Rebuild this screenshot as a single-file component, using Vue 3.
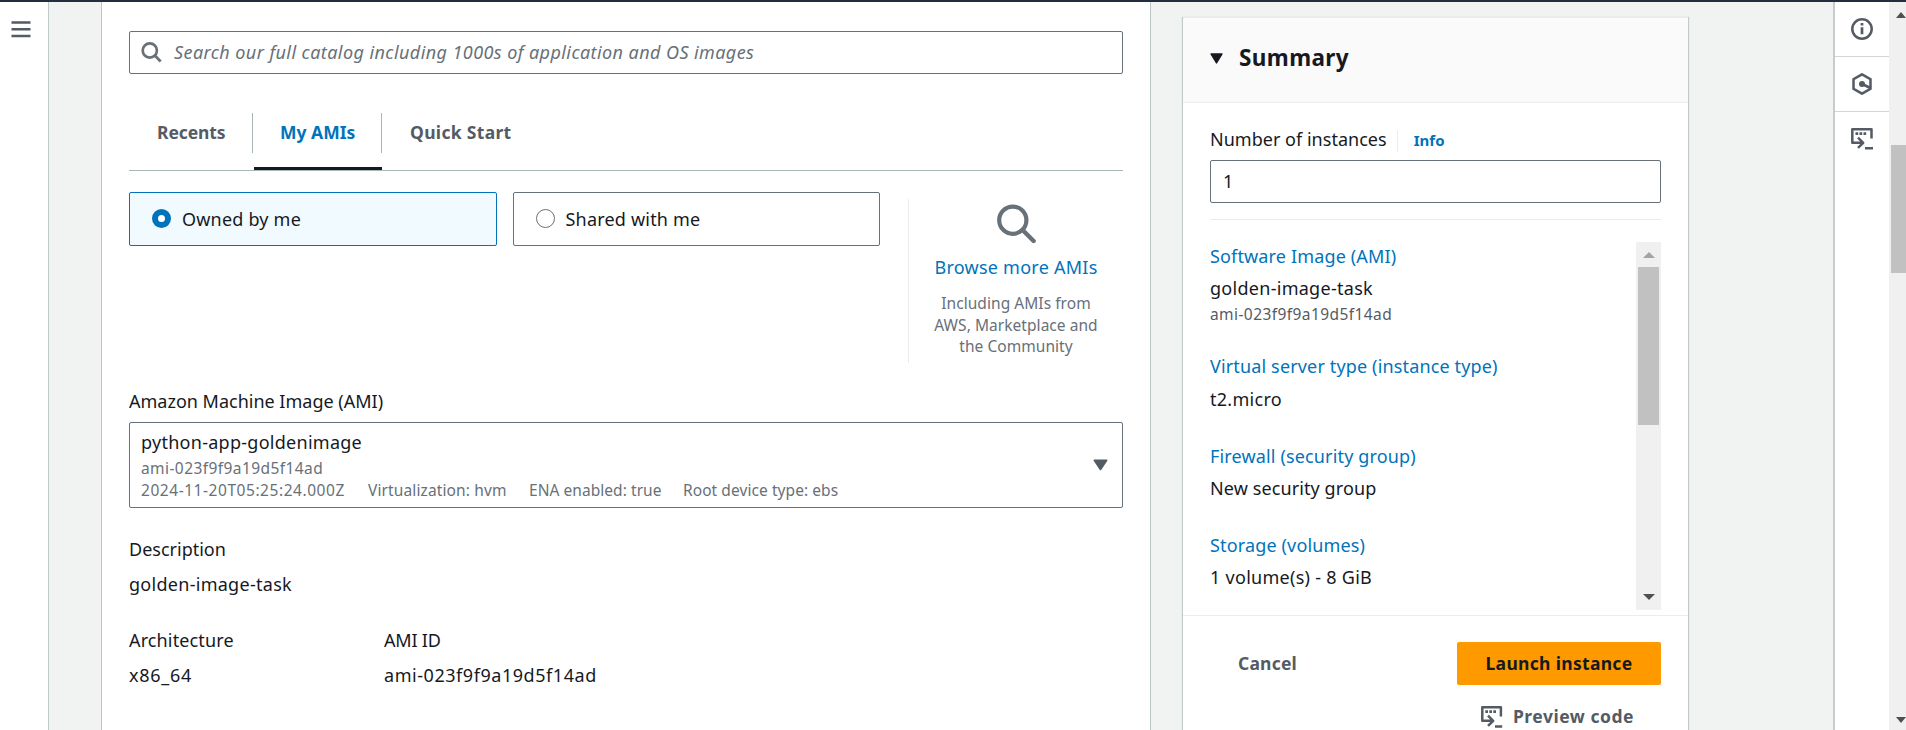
<script setup>
import { ref } from 'vue'

const search = ref('')
const instances = ref('1')

const tabs = [
  { label: 'Recents', cls: 'recents' },
  { label: 'My AMIs', cls: 'mine' },
  { label: 'Quick Start', cls: 'quick' },
]
const amiMeta = [
  { text: '2024-11-20T05:25:24.000Z', cls: 'created' },
  { text: 'Virtualization: hvm', cls: 'virt' },
  { text: 'ENA enabled: true', cls: 'ena' },
  { text: 'Root device type: ebs', cls: 'root' },
]
const summary = [
  { title: 'Software Image (AMI)', value: 'golden-image-task', note: 'ami-023f9f9a19d5f14ad', cls: 'software' },
  { title: 'Virtual server type (instance type)', value: 't2.micro', cls: 'server' },
  { title: 'Firewall (security group)', value: 'New security group', cls: 'firewall' },
  { title: 'Storage (volumes)', value: '1 volume(s) - 8 GiB', cls: 'storage' },
]
</script>

<template>
  <div class="page">
    <div class="topbar"></div>
    <div class="body">
      <nav class="nav-rail">
        <svg width="20" height="17" viewBox="0 0 20 17"><path d="M.5 1.5h19M.5 8.3h19M.5 15h19" stroke="#545b64" stroke-width="2.4" /></svg>
      </nav>

      <main class="content">
        <section class="card">
          <label class="search">
            <svg width="21" height="21" viewBox="0 0 21 21" fill="none" stroke="#687078" stroke-width="2.7">
              <circle cx="8.8" cy="8.5" r="7.1" /><path d="M13.8 13.5l5.9 6" />
            </svg>
            <input v-model="search" placeholder="Search our full catalog including 1000s of application and OS images" />
          </label>

          <div class="tabs">
            <button v-for="t in tabs" :key="t.label" class="tab" :class="t.cls">
              <span>{{ t.label }}</span>
            </button>
          </div>

          <div class="source">
            <div class="tiles">
              <div class="tile selected"><i class="radio"></i><span>Owned by me</span></div>
              <div class="tile"><i class="radio"></i><span>Shared with me</span></div>
            </div>
            <div class="browse">
              <svg width="40" height="40" viewBox="0 0 40 40" fill="none" stroke="#687078">
                <circle cx="16.8" cy="16.2" r="13.6" stroke-width="4.2" />
                <path d="M26.600 26l11 11" stroke-width="4.4" stroke-linecap="round" />
              </svg>
              <a>Browse more AMIs</a>
              <p>Including AMIs from<br />AWS, Marketplace and<br />the Community</p>
            </div>
          </div>

          <div class="line label">Amazon Machine Image (AMI)</div>
          <div class="select">
            <div>
              <div class="line name">python-app-goldenimage</div>
              <div class="small ident">ami-023f9f9a19d5f14ad</div>
              <div class="small meta">
                <span v-for="m in amiMeta" :key="m.text" :class="m.cls">{{ m.text }}</span>
              </div>
            </div>
            <svg width="15" height="12" viewBox="0 0 15 12"><path d="M1.3 1.3h12.4L7.5 10.5z" fill="#545b64" stroke="#545b64" stroke-width="1.6" stroke-linejoin="round" /></svg>
          </div>

          <div class="details">
            <div class="detail wide"><span class="desc">Description</span><span class="task">golden-image-task</span></div>
            <div class="detail"><span class="arch">Architecture</span><span class="x86">x86_64</span></div>
            <div class="detail"><span class="idlabel">AMI ID</span><span class="amiid">ami-023f9f9a19d5f14ad</span></div>
          </div>
        </section>

        <aside class="summary">
          <header>
            <svg width="13" height="11" viewBox="0 0 13 11"><path d="M1 1h11L6.500 10z" fill="#16191f" stroke="#16191f" stroke-width="1.4" stroke-linejoin="round" /></svg>
            <h2>Summary</h2>
          </header>
          <div class="form">
            <div class="count-label"><span>Number of instances</span><a>Info</a></div>
            <input v-model="instances" class="count" />
            <div class="scroll-area">
              <div class="groups">
                <div v-for="s in summary" :key="s.title" class="group" :class="s.cls">
                  <a>{{ s.title }}</a>
                  <span class="value">{{ s.value }}</span>
                  <small v-if="s.note">{{ s.note }}</small>
                </div>
              </div>
              <div class="scrollbar inner">
                <svg width="12" height="6" viewBox="0 0 12 6"><path d="M0 6L6 0l6 6z" fill="#a3a3a3" /></svg>
                <div class="thumb"></div>
                <svg class="down" width="12" height="6" viewBox="0 0 12 6"><path d="M0 0h12L6 6z" fill="#505050" /></svg>
              </div>
            </div>
          </div>
          <footer>
            <div class="actions">
              <button class="cancel">Cancel</button>
              <button class="launch">Launch instance</button>
            </div>
            <button class="preview">
              <svg width="22" height="22" viewBox="0 0 22 22" fill="none" stroke="#545b64" stroke-width="2.5">
                <path d="M19.900 10.500V1.300H1.300V14.800H11.500M7 9.700l5.200 5.100L7 19.900M14 20.500h7.200" stroke-linejoin="round" />
                <path d="M4.300 5.600h10.700" stroke-width="2.700" stroke-dasharray="2.700 1.300" />
              </svg>
              <span>Preview code</span>
            </button>
          </footer>
        </aside>
      </main>

      <nav class="tool-rail">
        <div class="tool">
          <svg width="22" height="22" viewBox="0 0 22 22" fill="none" stroke="#545b64">
            <circle cx="11" cy="11" r="9.700" stroke-width="2.500" />
            <path d="M11 5v2.600M11 9.200v7" stroke-width="2.700" />
          </svg>
        </div>
        <div class="tool">
          <svg width="22" height="22" viewBox="0 0 22 22" fill="none" stroke="#545b64" stroke-width="2.500">
            <path d="M11 1.300l8.500 4.900v9.600L11 20.700l-8.500-4.900V6.200z" />
            <path d="M11 11l8.500 4" stroke-width="2.600" /><circle cx="11" cy="11" r="3" fill="#545b64" stroke="none" />
          </svg>
        </div>
        <div class="tool last">
          <svg width="22" height="22" viewBox="0 0 22 22" fill="none" stroke="#545b64" stroke-width="2.500">
            <path d="M20.500 10.500V1.300H1.300V14.800H11.500M7 9.700l5.200 5.100L7 19.900M14 20.300h8" stroke-linejoin="round" />
            <path d="M4.500 5.600h10.700" stroke-width="2.700" stroke-dasharray="2.700 1.300" />
          </svg>
        </div>
      </nav>

      <div class="scrollbar outer">
        <svg width="10" height="6" viewBox="0 0 10 6"><path d="M0 6L5 0l5 6z" fill="#505050" /></svg>
        <div class="thumb"></div>
        <svg class="down" width="10" height="6" viewBox="0 0 10 6"><path d="M0 0h10L5 6z" fill="#505050" /></svg>
      </div>
    </div>
  </div>
</template>

<style>
body { margin: 0; overflow: hidden; }
</style>

<style scoped>
* { box-sizing: border-box; }
.page {
  width: 1906px; height: 730px; overflow: hidden;
  display: flex; flex-direction: column;
  background: #f1f3f3; color: #16191f;
  font: 18px/24px "Noto Sans", "Open Sans", sans-serif;
}
button { border: 0; background: none; padding: 0; font: inherit; font-size: 17.500px; font-weight: 700; color: #545b64; }
input { font: inherit; color: #16191f; outline: 0; }
a { color: #0073bb; }
svg { display: block; flex: none; }
.topbar { height: 2px; flex: none; background: #232f3e; }
.body { display: flex; height: 728px; }

.nav-rail { width: 49px; flex: none; background: #fff; border-right: 1px solid #c0c9c9; padding: 19px 0 0 11px; }
.content { flex: 1; display: flex; align-items: flex-start; padding-left: 52px; gap: 31px; }

.card { width: 1050px; height: 728px; background: #fff; border: solid #bfc6c6; border-width: 0 1px; padding: 29px 27px 0; }
.search { display: flex; align-items: center; height: 43px; border: 1px solid #687078; border-radius: 2px; padding-left: 11px; gap: 12px; }
.search input { flex: 1; min-width: 0; border: 0; padding: 0 0 1px; background: none; height: 26px; letter-spacing: .42px; }
.search input::placeholder { color: #687078; font-style: italic; opacity: 1; }

.tabs { display: flex; height: 58px; margin-top: 39px; border-bottom: 1px solid #aab7b8; }
.tab { height: 57px; padding: 0 0 17px; display: flex; border-bottom: 3px solid transparent; }
.tab span { height: 40px; padding: 7px 27px 9px 28px; border-right: 1px solid #aab7b8; line-height: 24px; text-align: left; white-space: nowrap; }
.recents span { width: 124px; letter-spacing: -.1px; }
.mine { border-bottom-color: #16191f; margin-left: 1px; color: #0073bb; }
.mine span { width: 128px; padding-left: 26px; }
.quick span { border: 0; letter-spacing: .32px; }

.source { display: flex; margin-top: 21px; height: 172px; }
.tiles { width: 751px; display: flex; gap: 16px; flex: none; }
.tile { width: 368px; height: 54px; border: 1px solid #687078; border-radius: 2px; display: flex; align-items: center; padding: 0 0 1px 22px; gap: 11px; letter-spacing: .2px; }
.tile.selected { border-color: #0073bb; background: #f1faff; }
.radio { width: 19px; height: 19px; border: 1px solid #687078; border-radius: 50%; }
.selected .radio { border: 6px solid #0073bb; background: #fff; }
.browse { width: 216px; height: 164px; margin: 7px 0 0 28px; border-left: 1px solid #eaeded; display: flex; flex-direction: column; align-items: center; padding: 5px 0 0; }
.browse a { margin-top: 11px; letter-spacing: .25px; }
.browse p { margin: 14px 0 0; font-size: 15.500px; line-height: 21.500px; letter-spacing: .05px; color: #687078; text-align: center; }

.label { margin-top: 25px; }
.select { height: 86px; margin-top: 9px; border: 1px solid #687078; border-radius: 2px; padding: 7px 14px 0 11px; display: flex; justify-content: space-between; }
.select svg { margin-top: 29px; }
.name { letter-spacing: .27px; }
.small { font-size: 15.500px; line-height: 22px; color: #687078; }
.ident { margin-top: 3px; letter-spacing: .42px; }
.meta { display: flex; white-space: nowrap; }
.created { width: 227px; letter-spacing: .55px; }
.virt { width: 161px; letter-spacing: .12px; }
.ena { width: 154px; letter-spacing: .05px; }
.root { letter-spacing: .07px; }

.details { display: grid; grid-template-columns: 255px 1fr; row-gap: 32px; margin-top: 29px; }
.detail { display: flex; flex-direction: column; gap: 11px; }
.wide { grid-column: 1 / -1; }
.task { letter-spacing: .28px; }
.arch { letter-spacing: .13px; }
.x86 { letter-spacing: .7px; }
.amiid { letter-spacing: .55px; }
.idlabel { letter-spacing: -.2px; }

.summary { width: 507px; height: 720px; flex: none; margin-top: 15px; background: #fff; border: solid #c3caca; border-width: 0 1px; box-shadow: 0 0 1px rgba(0, 28, 36, .2); }
.summary header { height: 86px; background: #fafafa; border-bottom: 1px solid #eaeded; border-top: 1px solid #eaeded; display: flex; align-items: center; padding: 0 0 4px 27px; gap: 16px; }
h2 { margin: 0; font-size: 22.500px; line-height: 28px; letter-spacing: .39px; }
.form { padding: 24px 27px 0; height: 512px; }
.count-label { display: flex; height: 24px; letter-spacing: .02px; }
.count-label a { height: 22px; line-height: 20px; margin: 3px 0 0 10px; padding-left: 16px; border-left: 1px solid #eaeded; font-size: 15px; font-weight: 700; letter-spacing: .06px; }
.count { display: block; width: 100%; height: 43px; margin-top: 9px; border: 1px solid #687078; border-radius: 2px; padding: 0 12px 1px; }
.scroll-area { margin-top: 16px; padding-top: 22px; border-top: 1px solid #eaeded; display: flex; justify-content: space-between; height: 391px; }
.group { display: flex; flex-direction: column; white-space: nowrap; letter-spacing: .15px; }
.group .value { margin-top: 8px; letter-spacing: .28px; }
.group small { font-size: 15.500px; line-height: 22px; margin-top: 3px; color: #545b64; letter-spacing: .42px; }
.software { height: 112px; padding-top: 2px; }
.server { height: 90px; }
.server .value { margin-top: 9px; }
.firewall { height: 89px; }
.firewall .value { letter-spacing: .1px; }

.scrollbar { background: #f0f0f0; display: flex; flex-direction: column; align-items: center; flex: none; }
.scrollbar .thumb { background: #c1c1c1; }
.scrollbar .down { margin-top: auto; }
.inner { width: 25px; height: 368px; padding: 10px 0; }
.inner .thumb { width: 21px; height: 158px; margin-top: 9px; }
.summary footer { border-top: 1px solid #eaeded; padding: 26px 27px 0; }
.actions { display: flex; justify-content: space-between; align-items: center; }
.cancel { margin-left: 28px; padding-bottom: 1px; letter-spacing: .2px; }
.launch { width: 204px; height: 43px; padding-bottom: 1px; border-radius: 2px; background: #ff9900; color: #16191f; letter-spacing: .31px; }
.preview { display: flex; align-items: center; gap: 10px; margin: 19px 27px 0 auto; letter-spacing: .52px; }
.preview svg { margin-top: 2px; }

.tool-rail { width: 56px; flex: none; background: #fff; border-left: 2px solid #c4cccc; }
.tool { height: 55px; border-bottom: 1px solid #d0d5d5; display: flex; align-items: center; justify-content: center; padding-right: 1px; }
.last { border: 0; padding-bottom: 1px; }
.outer { width: 17px; padding: 10px 0 7px; align-items: flex-end; }
.outer .thumb { width: 15px; height: 128px; margin-top: 127px; }
</style>
